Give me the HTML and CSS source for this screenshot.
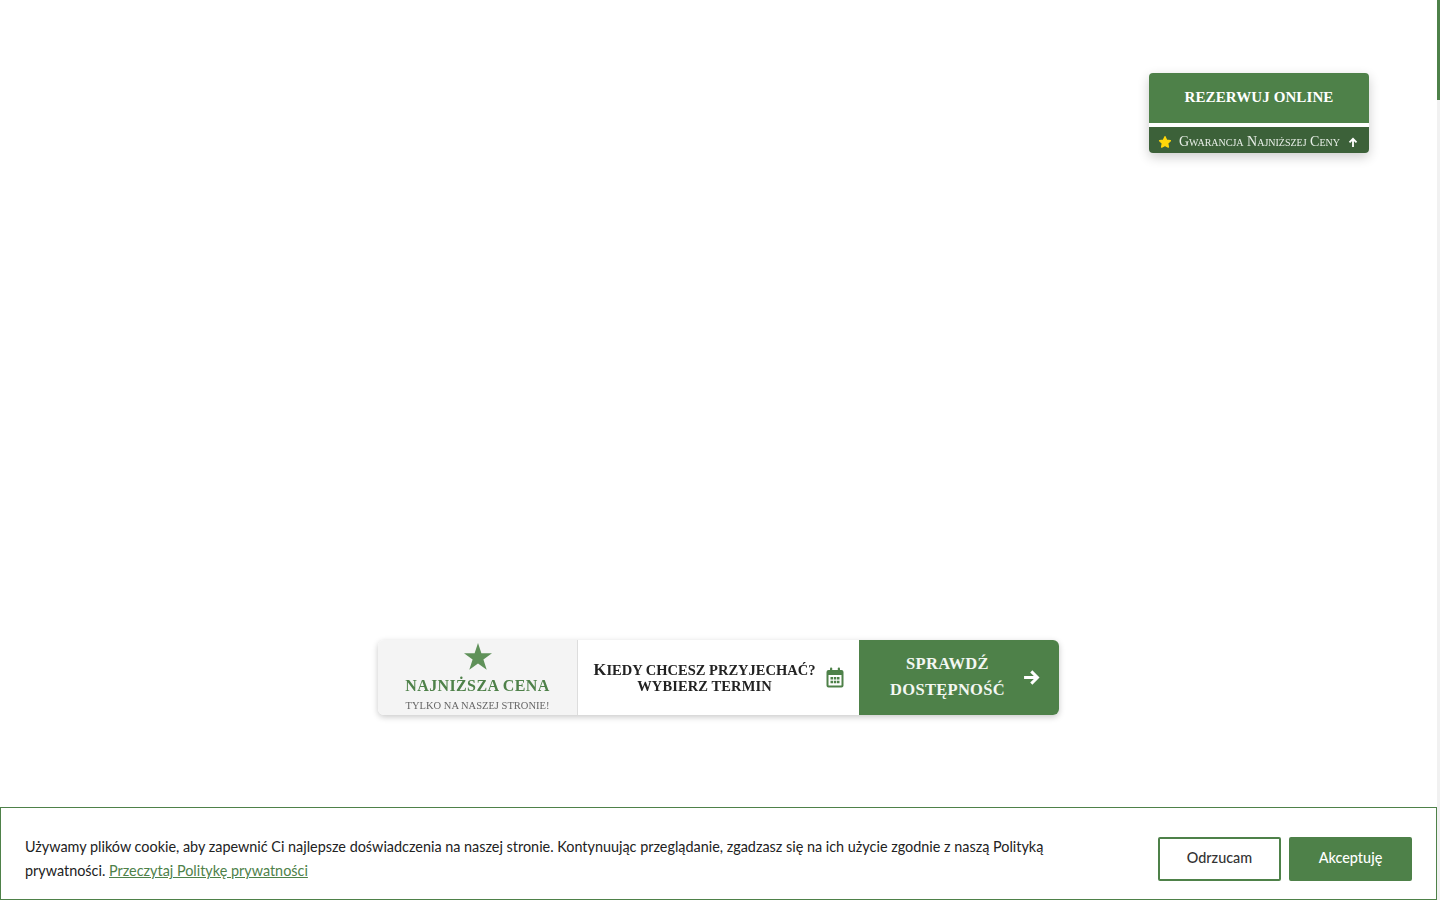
FILE: index.html
```html
<!DOCTYPE html>
<html lang="pl">
<head>
<meta charset="utf-8">
<title>Rezerwacja</title>
<link rel="stylesheet" href="styles.css">
</head>
<body>
<div class="scrollbar"><div class="scrollbar-thumb"></div></div>

<aside class="reserve">
  <a class="reserve-main">REZERWUJ ONLINE</a>
  <div class="reserve-sub">
    <svg class="reserve-star" viewBox="0 0 24 24"><path d="M12 3l2.800 5.900 6.400.9-4.600 4.500 1.100 6.400L12 17.700l-5.700 3 1.100-6.400-4.600-4.500 6.400-.9z"/></svg>
    <span class="reserve-text">Gwarancja Najniższej Ceny</span>
    <svg class="reserve-arrow" viewBox="0 0 12 12"><path d="M6 11.500V2M1.800 5.800L6 1.600l4.200 4.200"/></svg>
  </div>
</aside>

<section class="booking">
  <div class="booking-price">
    <svg class="booking-star" viewBox="0 0 28 27"><path d="M14 0l3.400 10.200H28l-8.600 6.300 3.300 10.300L14 20.500l-8.700 6.300 3.300-10.300L0 10.200h10.600z"/></svg>
    <div class="price-title">NAJNIŻSZA CENA</div>
    <div class="price-note">TYLKO NA NASZEJ STRONIE!</div>
  </div>
  <div class="booking-date">
    <div class="date-text"><span class="date-ask">Kiedy chcesz przyjechać?</span><span class="date-pick">wybierz termin</span></div>
    <svg class="calendar" viewBox="0 0 18 21">
      <path class="cal-body" fill-rule="evenodd" d="M2.500 3h13A2 2 0 0 1 17.500 5v13.500a2 2 0 0 1-2 2h-13a2 2 0 0 1-2-2V5a2 2 0 0 1 2-2zM2.500 8v10a.5.5 0 0 0 .5.5h12a.5.5 0 0 0 .5-.5V8z"/>
      <rect class="cal-body" x="4" y="0.500" width="2.200" height="4" rx="1"/>
      <rect class="cal-body" x="11.800" y="0.500" width="2.200" height="4" rx="1"/>
      <path class="cal-body" d="M4.500 10h2.500v2.500H4.500zM7.800 10h2.500v2.500H7.800zM11 10h2.500v2.500H11zM4.500 13.800h2.500v2.500H4.500zM7.800 13.800h2.500v2.500H7.800zM11 13.800h2.500v2.500H11z"/>
    </svg>
  </div>
  <a class="booking-cta">
    <span class="cta-text">SPRAWDŹ<br>DOSTĘPNOŚĆ</span>
    <svg class="cta-arrow" viewBox="0 0 16 16"><path d="M1 8h12.500M7.800 2.200L13.600 8l-5.800 5.800"/></svg>
  </a>
</section>

<div class="cookie">
  <p class="cookie-text">Używamy plików cookie, aby zapewnić Ci najlepsze doświadczenia na naszej stronie. Kontynuując przeglądanie, zgadzasz się na ich użycie zgodnie z naszą Polityką prywatności. <a class="cookie-link">Przeczytaj Politykę prywatności</a></p>
  <div class="cookie-actions">
    <button class="btn btn-outline">Odrzucam</button>
    <button class="btn btn-solid">Akceptuję</button>
  </div>
</div>
</body>
</html>
```

FILE: styles.css
```css
* { box-sizing: border-box; }
html, body { margin: 0; height: 100%; }
body { background: #fff; overflow: hidden; font-family: "Liberation Serif", serif; color: #222; }

.scrollbar { position: fixed; top: 0; right: 0; bottom: 0; width: 3px; background: #f1f1f1; }
.scrollbar-thumb { height: 100px; background: #4e8149; }

.reserve { position: fixed; left: 1149px; top: 73px; width: 220px; border-radius: 4px; box-shadow: 0 4px 12px rgba(0,0,0,.2); }
.reserve-main { display: flex; align-items: center; justify-content: center; height: 50px; padding-bottom: 2px; background: #4e8149; color: #fff; border-radius: 4px 4px 0 0; font-weight: 700; font-size: 15px; letter-spacing: .1px; }
.reserve-sub { display: flex; align-items: center; height: 26px; margin-top: 4px; padding: 4px 11px 0 9px; background: #3c6139; border-radius: 0 0 4px 4px; color: #e9efe8; font-size: 14px; box-shadow: 0 -4px 0 #fff; }
.reserve-star { width: 14px; height: 14px; fill: #ffd60a; stroke: #ffd60a; stroke-width: 2.500; stroke-linejoin: round; flex: none; }
.reserve-text { margin-left: 7px; font-variant: small-caps; white-space: nowrap; flex: 1; }
.reserve-arrow { width: 10px; height: 11px; fill: none; stroke: #fff; stroke-width: 2.200; flex: none; }

.booking { position: fixed; left: 378px; top: 640px; width: 681px; height: 75px; display: flex; border-radius: 6px; box-shadow: 0 2px 6px rgba(0,0,0,.22); background: #fff; }
.booking-price { width: 200px; flex: none; display: flex; flex-direction: column; align-items: center; padding-top: 3px; background: #f4f4f4; border-right: 1px solid #ddd; border-radius: 6px 0 0 6px; }
.booking-star { width: 28px; height: 27px; fill: #5f9159; }
.price-title { margin-top: 6px; font-size: 16px; line-height: 20px; font-weight: 700; color: #4e8149; letter-spacing: .37px; }
.price-note { margin-top: 3px; font-size: 10.500px; line-height: 14px; color: #666; }
.booking-date { width: 281px; flex: none; display: flex; align-items: center; padding-left: 15px; }
.date-text { display: flex; flex-direction: column; align-items: center; width: 223px; font-weight: 700; line-height: 16px; color: #222; white-space: nowrap; text-transform: uppercase; }
.date-ask { font-size: 14.500px; }
.date-ask::first-letter { font-size: 16.500px; }
.date-pick { font-size: 14.500px; letter-spacing: .1px; }
.calendar { width: 18px; height: 21px; margin-left: 10px; flex: none; }
.cal-body { fill: #4e8149; }
.booking-cta { flex: 1; display: flex; align-items: center; padding: 0 19px 0 30px; background: #4e8149; color: #f3f7f2; border-radius: 0 6px 6px 0; }
.cta-text { width: 117px; margin-top: -2px; text-align: center; font-weight: 700; font-size: 16.500px; line-height: 26px; letter-spacing: .3px; white-space: nowrap; }
.cta-arrow { width: 17px; height: 17px; margin-left: auto; fill: none; stroke: #fff; stroke-width: 2.800; }

.cookie { position: fixed; left: 0; right: 3px; bottom: 0; height: 93px; display: flex; align-items: center; justify-content: space-between; padding: 11px 24px 0 24px; background: #fff; border: 1px solid #4e8149; font-family: Lato, sans-serif; }
.cookie-text { margin: 0; width: 1040px; font-size: 14.400px; line-height: 24px; color: #222; }
.cookie-link { color: #4e8149; text-decoration: underline; }
.cookie-actions { display: flex; gap: 8px; }
.btn { width: 123px; height: 44px; padding-bottom: 5px; border-radius: 2px; font: 500 14.400px Lato, sans-serif; }
.btn-outline { background: #fff; border: 2px solid #4e8149; color: #333; }
.btn-solid { background: #4e8149; border: 2px solid #4e8149; color: #fff; }
```
